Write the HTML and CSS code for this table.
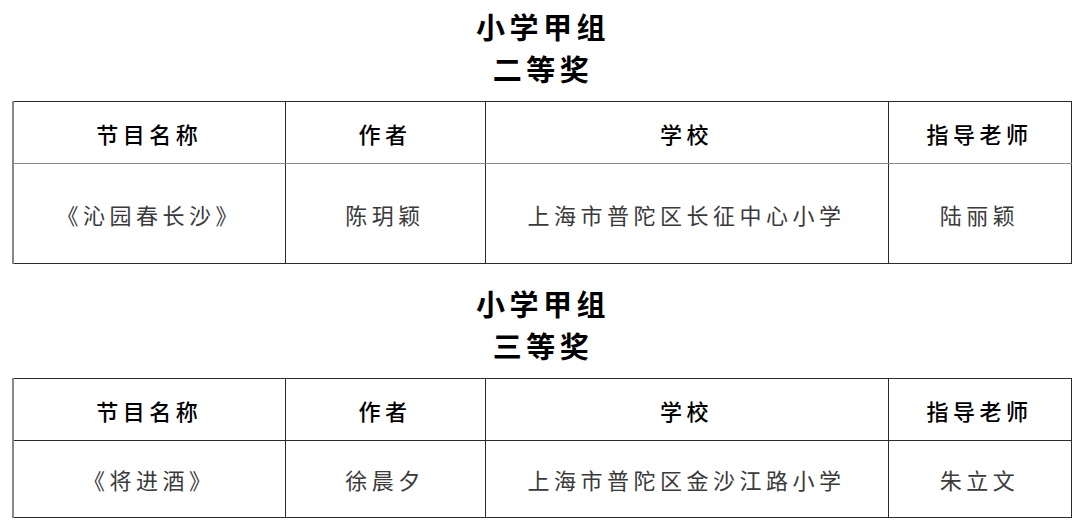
FILE: index.html
```html
<!DOCTYPE html>
<html lang="zh-CN">
<head>
<meta charset="utf-8">
<title>小学甲组</title>
<link rel="stylesheet" href="styles.css">
</head>
<body>
<div class="page">
  <section class="award award-first">
    <h2 class="title"><span>小学甲组</span><span>二等奖</span></h2>
    <table class="grid">
      <colgroup><col class="c1"><col class="c2"><col class="c3"><col class="c4"></colgroup>
      <tr class="head"><th>节目名称</th><th>作者</th><th>学校</th><th>指导老师</th></tr>
      <tr class="row tall"><td>《沁园春长沙》</td><td>陈玥颖</td><td>上海市普陀区长征中心小学</td><td>陆丽颖</td></tr>
    </table>
  </section>
  <section class="award award-second">
    <h2 class="title"><span>小学甲组</span><span>三等奖</span></h2>
    <table class="grid">
      <colgroup><col class="c1"><col class="c2"><col class="c3"><col class="c4"></colgroup>
      <tr class="head"><th>节目名称</th><th>作者</th><th>学校</th><th>指导老师</th></tr>
      <tr class="row short"><td>《将进酒》</td><td>徐晨夕</td><td>上海市普陀区金沙江路小学</td><td>朱立文</td></tr>
    </table>
  </section>
</div>
</body>
</html>
```
FILE: styles.css
```css
html, body {
  margin: 0;
  padding: 0;
  background: #ffffff;
}
body {
  width: 1080px;
  height: 522px;
  overflow: hidden;
  font-family: "Noto Sans CJK SC", "Noto Sans", sans-serif;
  color: #111;
}
.page {
  display: flex;
  flex-direction: column;
  padding: 5px 10px 0 12px;
}
.award-second {
  margin-top: 18px;
}
.title {
  margin: 0 0 12px 0;
  display: flex;
  flex-direction: column;
  align-items: center;
  font-size: 29px;
  line-height: 42px;
  font-weight: 700;
  letter-spacing: 4.5px;
  color: #000;
}
.title span {
  padding-left: 4px;
}
.grid {
  border-collapse: collapse;
  table-layout: fixed;
  width: 1058px;
}
.c1 { width: 272px; }
.c2 { width: 200px; }
.c3 { width: 403px; }
.c4 { width: 183px; }
.grid th, .grid td {
  border: 1px solid #2a2a2a;
  text-align: center;
  vertical-align: middle;
  padding: 0;
  font-size: 22px;
  letter-spacing: 4.5px;
}
.grid th:first-child, .grid td:first-child {
  border-left: 2px solid #888;
}
.grid th {
  font-weight: 500;
  color: #000;
  height: 61px;
}
.grid td {
  font-weight: 400;
  color: #3a3a3a;
}
.award-first .head th {
  border-bottom-color: #8a8a8a;
}
.tall td { height: 99px; }
.short td { height: 76px; }
```
